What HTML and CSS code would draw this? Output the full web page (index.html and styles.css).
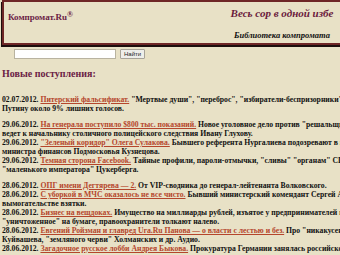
FILE: index.html
```html
<!DOCTYPE html>
<html lang="ru">

<head>
    <meta charset="UTF-8">
    <title>Компромат.Ru</title>
    <link rel="stylesheet" href="styles.css">
</head>

<body>
    <div class="page">
        <div class="header">
            <div class="logo">Компромат.Ru<sup>&reg;</sup></div>
            <div class="motto">
                <div class="slogan">Весь сор в одной избе</div>
                <div class="library">Библиотека компромата</div>
            </div>
        </div>

        <form class="search">
            <input type="text" class="query">
            <button type="button" class="find">Найти</button>
        </form>

        <h2 class="title">Новые поступления:</h2>

        <div class="news">
            <p>
                02.07.2012. <a href="#">Питерский фальсификат.</a> "Мертвые души", "переброс", "избиратели-беспризорники" и другие способы, которые принесли<br>
                Путину около 9% лишних голосов.
            </p>
            <p>
                29.06.2012. <a href="#">На генерала поступило $800 тыс. показаний.</a> Новое уголовное дело против "решальщика" из МВД<br>
                ведет к начальнику столичного полицейского следствия Ивану Глухову.<br>
                29.06.2012. <a href="#">"Зеленый коридор" Олега Сулакова.</a> Бывшего референта Нургалиева подозревают в причастности к похищению<br>
                министра финансов Подмосковья Кузнецова.<br>
                29.06.2012. <a href="#">Темная сторона Facebook.</a> Тайные профили, пароли-отмычки, "сливы" "органам" США и другие грехи<br>
                "маленького императора" Цукерберга.
            </p>
            <p>
                28.06.2012. <a href="#">ОПГ имени Дегтярева — 2.</a> От VIP-сводника до генерал-лейтенанта Волковского.<br>
                28.06.2012. <a href="#">С уборкой в МЧС оказалось не все чисто.</a> Бывший министерский комендант Сергей Аверин подозревается в<br>
                вымогательстве взятки.<br>
                28.06.2012. <a href="#">Бизнес на вещдоках.</a> Имущество на миллиарды рублей, изъятое у предпринимателей по уголовным делам и<br>
                "уничтоженное" на бумаге, правоохранители толкают налево.<br>
                28.06.2012. <a href="#">Евгений Ройзман и главред Ura.Ru Панова — о власти с лестью и без.</a> Про "никакусенького" губернатора<br>
                Куйвашева, "земляного черви" Холманских и др. Аудио.<br>
                28.06.2012. <a href="#">Загадочное русское лобби Андрея Быкова.</a> Прокуратура Германии занялась российско-швейцарскими<br>
                следками.
            </p>
        </div>
    </div>
</body>

</html>
```

FILE: styles.css
```css
html,
body {
    overflow: hidden;
}

body {
    margin: 0;
    background-color: #e8e1c6;
    font-family: 'Liberation Serif', 'Times New Roman', serif;
    color: #111;
}

.page {
    width: 460px;
    padding-left: 2px;
}

.header {
    display: grid;
    grid-template-columns: 222px 112px 1fr;
    height: 41px;
    border: 2px solid #6e2626;
    box-shadow: -1px 2px 0 #1c0d0d;
}

.logo {
    padding: 8px 0 0 4px;
    font-size: 9px;
    font-weight: bold;
    color: #6b2245;
}

.logo sup {
    font-size: 8px;
    vertical-align: 3px;
}

.motto {
    display: flex;
    flex-direction: column;
    align-items: center;
    justify-content: space-between;
    padding: 5px 0 3px;
}

.slogan {
    font-size: 11px;
    font-weight: bold;
    font-style: italic;
    color: #6b1a3c;
}

.library {
    font-size: 8.5px;
    font-weight: bold;
    font-style: italic;
    color: #111;
}

.search {
    display: flex;
    align-items: center;
    gap: 4px;
    margin: 4px 0 0 12px;
}

.query {
    width: 102px;
    height: 10px;
    padding: 0;
    margin: 0;
    box-sizing: border-box;
    border: 1px solid #b9b3a0;
    background-color: #fff;
}

.find {
    height: 10px;
    padding: 0 3px;
    margin: 0;
    border: 1px solid #a7a398;
    border-radius: 1px;
    background-color: #eeeeea;
    font-family: 'Liberation Sans', Arial, sans-serif;
    font-size: 6px;
    line-height: 8px;
    color: #222;
}

.title {
    margin: 9px 0 0;
    font-size: 10px;
    line-height: 12px;
    color: #6b2245;
}

.news p {
    margin: 0 0 7px;
    white-space: nowrap;
    font-size: 7.7px;
    font-weight: bold;
    line-height: 9px;
}

.news p:first-child {
    margin-top: 15px;
}

.news a {
    color: #b5462c;
}
```
